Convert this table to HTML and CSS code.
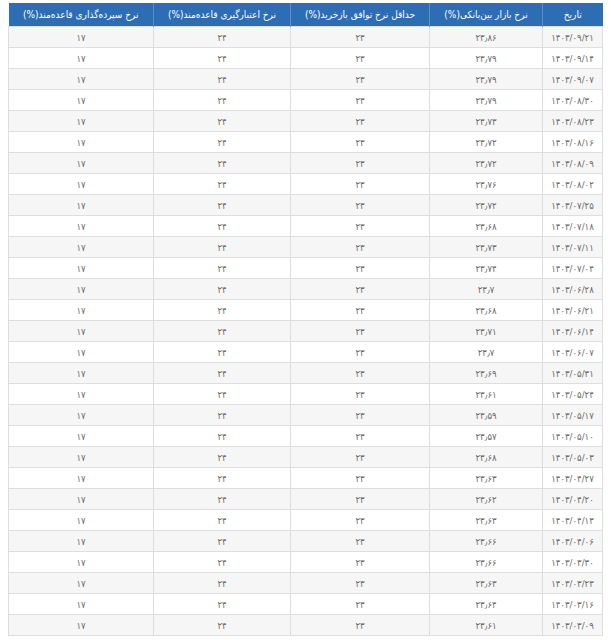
FILE: index.html
```html
<!DOCTYPE html>
<html lang="fa" dir="rtl">
<head>
<meta charset="utf-8">
<link rel="stylesheet" href="styles.css">
</head>
<body>
<div class="wrap">
<table class="rates">
<colgroup>
<col class="c1"><col class="c2"><col class="c3"><col class="c4"><col class="c5">
</colgroup>
<thead>
<tr>
<th>تاریخ</th>
<th>نرخ بازار بین‌بانکی(%)</th>
<th>حداقل نرخ توافق بازخرید(%)</th>
<th>نرخ اعتبارگیری قاعده‌مند(%)</th>
<th>نرخ سپرده‌گذاری قاعده‌مند(%)</th>
</tr>
</thead>
<tbody>
<tr><td>۱۴۰۳/۰۹/۲۱</td><td>۲۳٫۸۶</td><td>۲۳</td><td>۲۴</td><td>۱۷</td></tr>
<tr><td>۱۴۰۳/۰۹/۱۴</td><td>۲۳٫۷۹</td><td>۲۳</td><td>۲۴</td><td>۱۷</td></tr>
<tr><td>۱۴۰۳/۰۹/۰۷</td><td>۲۳٫۷۹</td><td>۲۳</td><td>۲۴</td><td>۱۷</td></tr>
<tr><td>۱۴۰۳/۰۸/۳۰</td><td>۲۳٫۷۹</td><td>۲۳</td><td>۲۴</td><td>۱۷</td></tr>
<tr><td>۱۴۰۳/۰۸/۲۳</td><td>۲۳٫۷۳</td><td>۲۳</td><td>۲۴</td><td>۱۷</td></tr>
<tr><td>۱۴۰۳/۰۸/۱۶</td><td>۲۳٫۷۲</td><td>۲۳</td><td>۲۴</td><td>۱۷</td></tr>
<tr><td>۱۴۰۳/۰۸/۰۹</td><td>۲۳٫۷۲</td><td>۲۳</td><td>۲۴</td><td>۱۷</td></tr>
<tr><td>۱۴۰۳/۰۸/۰۲</td><td>۲۳٫۷۶</td><td>۲۳</td><td>۲۴</td><td>۱۷</td></tr>
<tr><td>۱۴۰۳/۰۷/۲۵</td><td>۲۳٫۷۲</td><td>۲۳</td><td>۲۴</td><td>۱۷</td></tr>
<tr><td>۱۴۰۳/۰۷/۱۸</td><td>۲۳٫۶۸</td><td>۲۳</td><td>۲۴</td><td>۱۷</td></tr>
<tr><td>۱۴۰۳/۰۷/۱۱</td><td>۲۳٫۷۳</td><td>۲۳</td><td>۲۴</td><td>۱۷</td></tr>
<tr><td>۱۴۰۳/۰۷/۰۴</td><td>۲۳٫۷۴</td><td>۲۳</td><td>۲۴</td><td>۱۷</td></tr>
<tr><td>۱۴۰۳/۰۶/۲۸</td><td>۲۳٫۷</td><td>۲۳</td><td>۲۴</td><td>۱۷</td></tr>
<tr><td>۱۴۰۳/۰۶/۲۱</td><td>۲۳٫۶۸</td><td>۲۳</td><td>۲۴</td><td>۱۷</td></tr>
<tr><td>۱۴۰۳/۰۶/۱۴</td><td>۲۳٫۷۱</td><td>۲۳</td><td>۲۴</td><td>۱۷</td></tr>
<tr><td>۱۴۰۳/۰۶/۰۷</td><td>۲۳٫۷</td><td>۲۳</td><td>۲۴</td><td>۱۷</td></tr>
<tr><td>۱۴۰۳/۰۵/۳۱</td><td>۲۳٫۶۹</td><td>۲۳</td><td>۲۴</td><td>۱۷</td></tr>
<tr><td>۱۴۰۳/۰۵/۲۴</td><td>۲۳٫۶۱</td><td>۲۳</td><td>۲۴</td><td>۱۷</td></tr>
<tr><td>۱۴۰۳/۰۵/۱۷</td><td>۲۳٫۵۹</td><td>۲۳</td><td>۲۴</td><td>۱۷</td></tr>
<tr><td>۱۴۰۳/۰۵/۱۰</td><td>۲۳٫۵۷</td><td>۲۳</td><td>۲۴</td><td>۱۷</td></tr>
<tr><td>۱۴۰۳/۰۵/۰۳</td><td>۲۳٫۶۸</td><td>۲۳</td><td>۲۴</td><td>۱۷</td></tr>
<tr><td>۱۴۰۳/۰۴/۲۷</td><td>۲۳٫۶۳</td><td>۲۳</td><td>۲۴</td><td>۱۷</td></tr>
<tr><td>۱۴۰۳/۰۴/۲۰</td><td>۲۳٫۶۲</td><td>۲۳</td><td>۲۴</td><td>۱۷</td></tr>
<tr><td>۱۴۰۳/۰۴/۱۳</td><td>۲۳٫۶۳</td><td>۲۳</td><td>۲۴</td><td>۱۷</td></tr>
<tr><td>۱۴۰۳/۰۴/۰۶</td><td>۲۳٫۶۶</td><td>۲۳</td><td>۲۴</td><td>۱۷</td></tr>
<tr><td>۱۴۰۳/۰۳/۳۰</td><td>۲۳٫۶۶</td><td>۲۳</td><td>۲۴</td><td>۱۷</td></tr>
<tr><td>۱۴۰۳/۰۳/۲۳</td><td>۲۳٫۶۳</td><td>۲۳</td><td>۲۴</td><td>۱۷</td></tr>
<tr><td>۱۴۰۳/۰۳/۱۶</td><td>۲۳٫۶۴</td><td>۲۳</td><td>۲۴</td><td>۱۷</td></tr>
<tr><td>۱۴۰۳/۰۳/۰۹</td><td>۲۳٫۶۱</td><td>۲۳</td><td>۲۴</td><td>۱۷</td></tr>
</tbody>
</table>
</div>
</body>
</html>
```

FILE: styles.css
```css
html, body {
  margin: 0;
  padding: 0;
  background: #ffffff;
}
.wrap {
  padding: 3px 8px 0 9px;
}
.rates {
  width: 594px;
  border-collapse: collapse;
  table-layout: fixed;
  font-family: "DejaVu Sans", sans-serif;
  font-stretch: condensed;
  direction: rtl;
}
.c1 { width: 60px; }
.c2 { width: 113px; }
.c3 { width: 139px; }
.c4 { width: 137px; }
.c5 { width: 145px; }
.rates th {
  background: #2d6db3;
  color: #ffffff;
  font-size: 10px;
  font-weight: normal;
  height: 23px;
  padding: 0 2px;
  border-left: 1px solid #5a8fcb;
  text-align: center;
  white-space: nowrap;
  overflow: hidden;
}
.rates th:last-child {
  border-left: none;
}
.rates td {
  height: 20px;
  padding: 0 4px;
  font-size: 9.5px;
  color: #6a6a6a;
  text-align: center;
  border: 1px solid #dedede;
}
.rates tbody tr:nth-child(odd) td {
  background: #f6f6f6;
}
.rates tbody tr:nth-child(even) td {
  background: #ffffff;
}
```
